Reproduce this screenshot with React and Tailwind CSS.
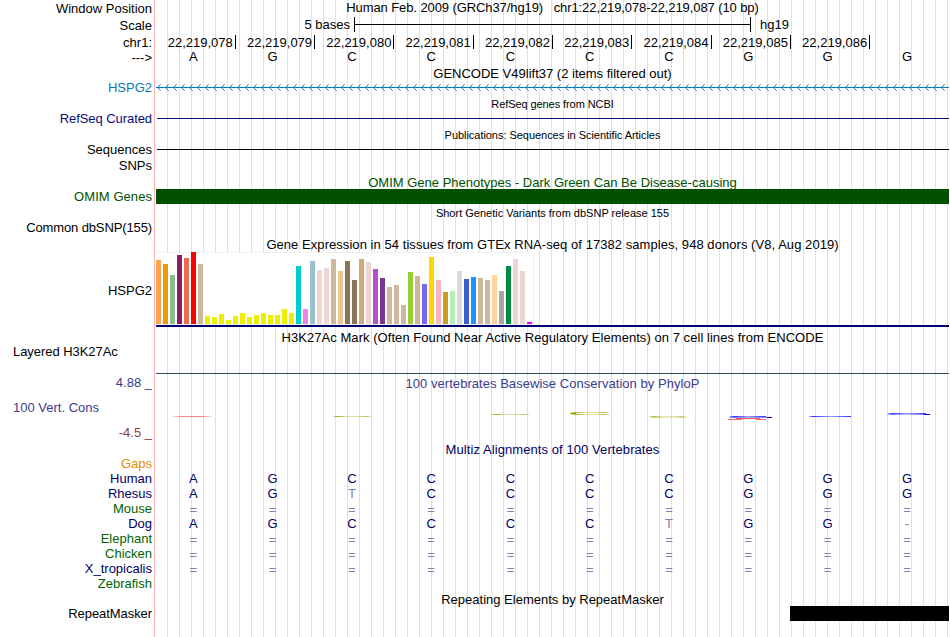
import React from 'react';
import { clsx } from 'clsx';

const labels = [
  { text: 'Window Position', className: 'mt-[1px]' },
  { text: 'Scale', className: 'mt-[2px]' },
  { text: 'chr1:', className: 'mt-[2px]' },
  { text: '--->', className: '' },
  { text: 'HSPG2', className: 'mt-[15px] text-[#0c78b4]' },
  { text: 'RefSeq Curated', className: 'mt-[16px] text-[#0c0c78] tracking-[-0.07px]' },
  { text: 'Sequences', className: 'mt-[16px]' },
  { text: 'SNPs', className: 'mt-[1px]' },
  { text: 'OMIM Genes', className: 'mt-[16px] text-[#005000] tracking-[0.06px]' },
  { text: 'Common dbSNP(155)', className: 'mt-[16px] tracking-[-0.12px]' },
  { text: 'HSPG2', className: 'mt-[48px]' },
  { text: 'Layered H3K27Ac', className: 'mt-[46px] self-start pl-[13px] tracking-[-0.05px]' },
  { text: '4.88 _', className: 'mt-[16px] text-[#3c3c8c]' },
  { text: '100 Vert. Cons', className: 'mt-[10px] self-start pl-[13px] text-[#3c3c8c]' },
  { text: '-4.5 _', className: 'mt-[10px] text-[#8c3c3c]' },
  { text: 'Gaps', className: 'mt-[16px] text-[#e68c00]' },
  { text: 'Human', className: 'text-[#000064]' },
  { text: 'Rhesus', className: 'text-[#000064]' },
  { text: 'Mouse', className: 'text-[#006400]' },
  { text: 'Dog', className: 'text-[#000064]' },
  { text: 'Elephant', className: 'text-[#006400]' },
  { text: 'Chicken', className: 'text-[#006400]' },
  { text: 'X_tropicalis', className: 'text-[#000064]' },
  { text: 'Zebrafish', className: 'text-[#006400]' },
  { text: 'RepeatMasker', className: 'mt-[15px] tracking-[-0.07px]' },
];

const positions = [
  '22,219,078', '22,219,079', '22,219,080', '22,219,081', '22,219,082',
  '22,219,083', '22,219,084', '22,219,085', '22,219,086',
];

const alignments = ['AGCCCCCGGG', 'AGTCCCCGGG', '==========', 'AGCCCCTGG-', '==========', '==========', '=========='];

// [height, color] for each GTEx tissue
const tissues = [
  [64, '#ffa54f'], [60, '#ee9a00'], [49, '#8fbc8f'], [69, '#8b1c62'], [66, '#ee6a50'], [72, '#ff0000'],
  [60, '#cdb79e'], [8, '#eeee00'], [7, '#eeee00'], [10, '#eeee00'], [4, '#eeee00'], [8, '#eeee00'],
  [11, '#eeee00'], [7, '#eeee00'], [9, '#eeee00'], [11, '#eeee00'], [9, '#eeee00'], [9, '#eeee00'],
  [15, '#eeee00'], [11, '#eeee00'], [58, '#00cdcd'], [15, '#ee82ee'], [63, '#9ac0cd'], [54, '#eed5d2'],
  [56, '#eed5d2'], [65, '#cdb79e'], [53, '#eec591'], [63, '#8b7355'], [44, '#8b7355'], [65, '#cdaa7d'],
  [62, '#eed5d2'], [55, '#b452cd'], [46, '#7a378b'], [37, '#cdb79e'], [39, '#cdb79e'], [19, '#cdb79e'],
  [52, '#9acd32'], [48, '#cdb79e'], [40, '#7a67ee'], [67, '#ffd700'], [44, '#ffb6c1'], [32, '#cd9b1d'],
  [33, '#b4eeb4'], [53, '#d9d9d9'], [45, '#3a5fcd'], [47, '#1e90ff'], [46, '#cdb79e'], [44, '#cdb79e'],
  [49, '#ffd39b'], [33, '#a6a6a6'], [58, '#008b45'], [65, '#eed5d2'], [53, '#eed5d2'], [2, '#ff00ff'],
];

function Title({ children, small, className }) {
  return (
    <div className={clsx('h-[15px] w-[793px] text-center whitespace-pre', small && 'text-[11px]', className)}>
      {children}
    </div>
  );
}

function Bases({ letters, className }) {
  return (
    <div className={clsx('-ml-[2.4px] grid h-[15px] w-[793px] grid-cols-10 text-center', className)}>
      {letters.split('').map((letter, i) => (
        <span
          key={i}
          className={clsx(
            (letter === '=' || letter === '-' || letter === 'T') && 'text-[#8080b2]',
            letter === '=' && 'pt-px'
          )}
        >
          {letter}
        </span>
      ))}
    </div>
  );
}

function ScaleBar() {
  return (
    <div className="mt-[2px] flex h-[15px]">
      <span className="w-[194px] text-right">5 bases</span>
      <div className="ml-[4px] flex w-[397px] items-center border-x border-black">
        <div className="h-px w-full bg-black" />
      </div>
      <span className="ml-[9px]">hg19</span>
    </div>
  );
}

function Ruler() {
  return (
    <div className="mt-[3px] grid h-[15px] w-[713.7px] grid-cols-9">
      {positions.map((pos) => (
        <div key={pos} className="-mr-[0.5px] flex items-start justify-end gap-[2px]">
          <span>{pos}</span>
          <span className="h-[14px] w-px bg-black" />
        </div>
      ))}
    </div>
  );
}

function GeneArrows() {
  const arrows = Array.from({ length: 99 }, (_, i) => 1 + i * 8);
  return (
    <svg width="793" height="9" className="mt-[2px] block" fill="none" stroke="#0c78b4" shapeRendering="crispEdges">
      <path d="M0 4.5H793" />
      {arrows.map((x) => (
        <g key={x}>
          <path d={`M${x + 1} 3.5h1M${x + 1} 5.5h1M${x + 2} 2.5h1M${x + 2} 6.5h1`} />
          <path d={`M${x + 3} 1.5h1M${x + 3} 7.5h1`} strokeOpacity="0.6" />
        </g>
      ))}
    </svg>
  );
}

function Expression() {
  return (
    <div className="flex h-[73px] w-[378px] items-end gap-[2px] border-t border-r border-b border-[#f0f0f0] bg-white">
      {tissues.map(([height, color], i) => (
        <div key={i} className="-mt-[1px] w-[5px] shrink-0" style={{ height, backgroundColor: color }} />
      ))}
    </div>
  );
}

function Conservation() {
  return (
    <svg width="793" height="16" className="mt-[17px] block" fill="none">
      <defs>
        <linearGradient id="red">
          <stop offset="0" stopColor="#ff6464" stopOpacity="0.2" />
          <stop offset="0.25" stopColor="#ff6464" stopOpacity="0.8" />
          <stop offset="0.75" stopColor="#ff6464" stopOpacity="0.8" />
          <stop offset="1" stopColor="#ff6464" stopOpacity="0.2" />
        </linearGradient>
        <linearGradient id="olive">
          <stop offset="0" stopColor="#a0a000" stopOpacity="0.4" />
          <stop offset="0.12" stopColor="#a0a000" stopOpacity="0.9" />
          <stop offset="0.35" stopColor="#a0a000" stopOpacity="0.35" />
          <stop offset="0.65" stopColor="#a0a000" stopOpacity="0.35" />
          <stop offset="0.85" stopColor="#a0a000" stopOpacity="0.7" />
          <stop offset="1" stopColor="#a0a000" stopOpacity="0.15" />
        </linearGradient>
        <linearGradient id="blue">
          <stop offset="0" stopColor="#0000ff" stopOpacity="0.4" />
          <stop offset="0.12" stopColor="#0000ff" stopOpacity="0.8" />
          <stop offset="0.5" stopColor="#0000ff" stopOpacity="0.4" />
          <stop offset="1" stopColor="#0000ff" stopOpacity="0.8" />
        </linearGradient>
      </defs>
      <rect x="16" y="8" width="40" height="1" fill="url(#red)" />
      <rect x="177" y="8" width="39" height="1" fill="url(#olive)" />
      <rect x="335" y="6" width="39" height="1" fill="url(#olive)" />
      <path d="M414 5.5h6" stroke="#a0a000" />
      <rect x="416" y="4" width="38" height="1" fill="url(#olive)" />
      <rect x="416" y="6" width="38" height="1" fill="url(#olive)" />
      <rect x="493" y="8" width="38" height="1" fill="url(#olive)" opacity="0.8" />
      <rect x="494" y="9" width="39" height="1" fill="url(#olive)" opacity="0.6" />
      <rect x="574" y="8" width="36" height="1" fill="url(#blue)" />
      <rect x="573" y="9" width="38" height="1" fill="url(#blue)" opacity="0.7" />
      <path d="M611 9.5h5" stroke="#0000ff" />
      <path d="M572 11.5h14M600 11.5h10" stroke="#ff6464" />
      <path d="M580 10.5h24" stroke="#ff3232" strokeOpacity="0.8" />
      <rect x="653" y="8" width="42" height="1" fill="url(#blue)" />
      <rect x="732" y="5" width="38" height="1" fill="url(#blue)" />
      <rect x="731" y="6" width="38" height="1" fill="url(#blue)" opacity="0.6" />
      <path d="M768 6.5h6" stroke="#0000ff" />
    </svg>
  );
}

export default function App() {
  return (
    <div className="flex h-[637px] w-[950px] overflow-hidden bg-white font-['Liberation_Sans',Arial,sans-serif] text-[13px] leading-[15px] text-black">
      <div className="flex w-[154px] flex-col items-end">
        {labels.map(({ text, className }, i) => (
          <div key={i} className={clsx('h-[15px] pr-[2px] whitespace-nowrap', className)}>{text}</div>
        ))}
      </div>
      <div className="mr-px w-px bg-[#ffb4b4]" />
      <div className="w-[793px] bg-[repeating-linear-gradient(to_right,transparent_0_11px,#dcdcff_11px_12px)]">
        <Title className="tracking-[-0.09px]">{'Human Feb. 2009 (GRCh37/hg19)   chr1:22,219,078-22,219,087 (10 bp)'}</Title>
        <ScaleBar />
        <Ruler />
        <Bases letters="AGCCCCCGGG" className="-mt-px" />
        <Title className="mt-[2px]">GENCODE V49lift37 (2 items filtered out)</Title>
        <GeneArrows />
        <Title small className="mt-[5px] tracking-[-0.08px]">RefSeq genes from NCBI</Title>
        <div className="mt-[6px] ml-px h-px bg-[#0c0c78]" />
        <Title small className="mt-[9px] tracking-[-0.04px]">Publications: Sequences in Scientific Articles</Title>
        <div className="mt-[6px] ml-px h-px bg-black" />
        <Title className="mt-[25px] -mb-px text-[#005000]">OMIM Gene Phenotypes - Dark Green Can Be Disease-causing</Title>
        <div className="h-[15px] bg-[#005000]" />
        <Title small className="mt-[2px]">Short Genetic Variants from dbSNP release 155</Title>
        <Title className="mt-[16px] tracking-[0.055px]">Gene Expression in 54 tissues from GTEx RNA-seq of 17382 samples, 948 donors (V8, Aug 2019)</Title>
        <Expression />
        <div className="h-[2px] bg-[#00006e]" />
        <Title className="mt-[3px] tracking-[0.05px]">H3K27Ac Mark (Often Found Near Active Regulatory Elements) on 7 cell lines from ENCODE</Title>
        <div className="mt-[28px] h-px bg-[#2f4f5f]" />
        <Title className="mt-[2px] tracking-[0.04px] text-[#3c3c8c]">100 vertebrates Basewise Conservation by PhyloP</Title>
        <Conservation />
        <Title className="mt-[18px] tracking-[0.08px] text-[#000064]">Multiz Alignments of 100 Vertebrates</Title>
        <div className="mt-[14px] text-[#000064]">
          {alignments.map((letters, i) => (
            <Bases key={i} letters={letters} />
          ))}
        </div>
        <Title className="mt-[16px] -mb-px">Repeating Elements by RepeatMasker</Title>
        <div className="ml-[634px] h-[15px] bg-black" />
      </div>
    </div>
  );
}
